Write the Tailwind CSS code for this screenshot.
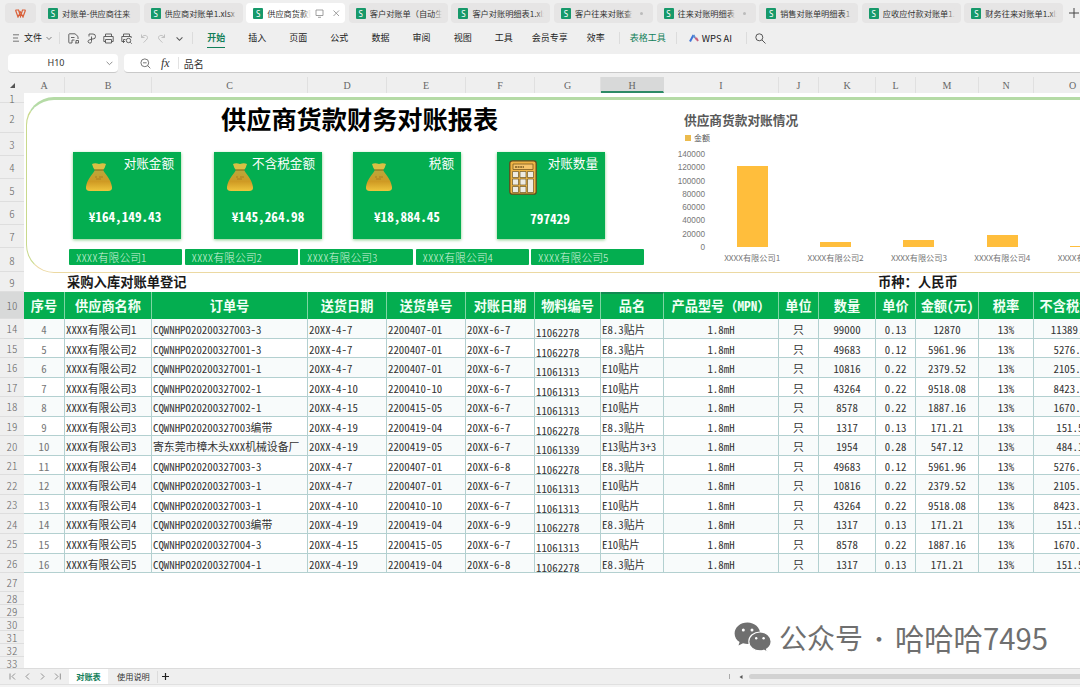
<!DOCTYPE html>
<html lang="zh-CN">

<head>
    <meta charset="UTF-8" />
    <meta name="viewport" content="width=device-width, initial-scale=1.0" />
    <title>供应商货款财务对账报表</title>
    <script src="https://cdn.jsdelivr.net/npm/@tailwindcss/browser@4"></script>
</head>

<body class="w-[1080px] h-[687px] overflow-hidden bg-[#efefef] text-[#333] font-['Noto_Sans_CJK_SC',sans-serif]">
    <svg class="absolute w-0 h-0">
        <defs>
            <linearGradient id="gold" x1="0" y1="0" x2="0" y2="1">
                <stop offset="0" stop-color="#b9a83c" />
                <stop offset=".55" stop-color="#cf9a24" />
                <stop offset="1" stop-color="#efc53d" />
            </linearGradient>
        </defs>
        <symbol id="bag" viewBox="0 0 28 30">
            <path d="M7 2q3-1.500 7 0q4-1.500 7 0q-1 4-3 6h-8q-2-2-3-6z" fill="#d8c044" />
            <path d="M10 8h8c2 4 8 9 9 17q.5 4-4 4h-18q-4.500 0-4-4c1-8 7-13 9-17z" fill="url(#gold)" />
            <path d="M9.500 8h9" stroke="#8d7420" stroke-width="1.300" />
            <path d="M10 15h2m2 0h4m-7 2h5" stroke="#a47620" stroke-width=".8" />
        </symbol>
    </svg>

    <div class="flex flex-col w-full h-full">
        <!-- File tabs -->
        <div class="flex h-[26px] pt-[3px] pl-[5px] shrink-0">
            <div class="w-[31px] h-5 mr-[5px] shrink-0 rounded bg-[#e6e5e5] flex items-center justify-center">
                <svg class="w-[11px] h-[9px]" viewBox="0 0 22 18" fill="none" stroke="#d9613b" stroke-width="2.400">
                    <path d="M1 2h6l4 13 4-13h6M1 2l5 14 5-10 5 10 5-14M7 2l3 6" />
                </svg>
            </div>
            <div id="tabs" class="flex gap-[3.600px]"></div>
            <svg class="w-[10px] h-[10px] ml-[6px] mt-[5px] shrink-0" viewBox="0 0 10 10" stroke="#444"><path d="M5 0v10M0 5h10" /></svg>
        </div>

        <!-- Menu -->
        <div class="flex items-center h-[24px] pl-[12px] shrink-0 text-[9px] whitespace-nowrap text-[#222]">
            <svg class="w-2 h-2 mr-1 shrink-0" viewBox="0 0 8 8" stroke="#555" stroke-width=".8"><path d="M1 .8h6M1 4h5M1 7.200h6" /></svg>
            <span class="w-[18px]">文件</span>
            <svg class="w-[6px] h-[6px] ml-[4px] shrink-0" viewBox="0 0 6 6" fill="none" stroke="#666" stroke-width=".8"><path d="M.5 2l2.500 2.500 2.500-2.500" /></svg>
            <div class="w-px h-3 ml-[7px] bg-[#dcdcdc]"></div>
            <div class="flex items-center gap-[6.700px] ml-[8px] text-[#555]">
                <svg class="w-[11px] h-[11px]" viewBox="0 0 11 11" fill="none" stroke="currentColor" stroke-width=".9"><path d="M4 10H1.500q-.7 0-.7-.7V1.500q0-.7.7-.7H7L10 3.500V6M3 4.500h3.500M4 10v-3h2.500M7 10h3.500V7.500H8V10" /></svg>
                <svg class="w-[11px] h-[11px]" viewBox="0 0 11 11" fill="none" stroke="currentColor" stroke-width=".9"><path d="M3 3.500V1h4a2.300 2.300 0 0 1 0 5H5.500v2.500a1.700 1.700 0 1 1-3 -1.200l3-1.300V3.500" /></svg>
                <svg class="w-[11px] h-[11px]" viewBox="0 0 11 11" fill="none" stroke="currentColor" stroke-width=".9"><path d="M2.500 3.500V1h6v2.500M2.500 8.500H.8v-5h9.400v5H8.500M2.500 6.500h6V10h-6z" /></svg>
                <svg class="w-[11px] h-[11px]" viewBox="0 0 11 11" fill="none" stroke="currentColor" stroke-width=".9"><path d="M2.500 3.500V1h6v2.500M4 8.500H.8v-5h9.400V5M2.500 10V6.500h2M9.300 9.300l1.400 1.400" /><circle cx="7.500" cy="7.500" r="2.200" /></svg>
                <svg class="w-[11px] h-[11px] text-[#bbb]" viewBox="0 0 11 11" fill="none" stroke="currentColor" stroke-width=".9"><path d="M2.500 1.500v3h3M2.500 4.500C4 2 8 1.500 8.500 4.500 8.500 6.500 6 8 4.500 9.500" /></svg>
                <svg class="w-[11px] h-[11px] text-[#bbb]" viewBox="0 0 11 11" fill="none" stroke="currentColor" stroke-width=".9"><path d="M8.500 1.500v3h-3M8.500 4.500C7 2 3 1.500 2.500 4.500 2.500 6.500 5 8 6.500 9.500" /></svg>
                <svg class="w-[7px] h-[7px] ml-[2px]" viewBox="0 0 6 6" fill="none" stroke="currentColor" stroke-width=".9"><path d="M.5 2l2.500 2.500 2.500-2.500" /></svg>
            </div>
            <div class="w-px h-3 ml-[9px] bg-[#dcdcdc]"></div>
            <div class="ml-[14px] relative w-[18px] font-bold text-[#12805a]">开始<div class="absolute left-0 right-0 -bottom-[3px] h-px bg-[#12805a]"></div></div>
            <div class="flex gap-[23.100px] ml-[23px]">
                <span>插入</span><span>页面</span><span>公式</span><span>数据</span><span>审阅</span><span>视图</span><span>工具</span>
            </div>
            <span class="ml-[19px]">会员专享</span>
            <span class="ml-[19px]">效率</span>
            <div class="w-px h-3 ml-[14px] bg-[#dcdcdc]"></div>
            <span class="ml-[10px] text-[#12805a]">表格工具</span>
            <div class="w-px h-3 ml-[10px] bg-[#dcdcdc]"></div>
            <svg class="w-[10px] h-2 ml-[12px]" viewBox="0 0 10 8" fill="none" stroke-width="2"><path d="M1 7.500L4.500 1" stroke="#3f74d8" /><path d="M4.500 1L6 4" stroke="#5d8fd0" /><path d="M6 4.500h1.500l1.500 2.500" stroke="#c9607c" /></svg>
            <span class="ml-[3px] text-[9.400px]">WPS AI</span>
            <div class="w-px h-3 ml-[14px] bg-[#dcdcdc]"></div>
            <svg class="w-[11px] h-[11px] ml-[8px]" viewBox="0 0 11 11" fill="none" stroke="#444" stroke-width=".9"><circle cx="4.300" cy="4.300" r="3.500" /><path d="M7 7l3.500 3.500" /></svg>
        </div>

        <!-- Formula bar -->
        <div class="flex h-[27px] pt-[4px] pl-[8px] gap-[6px] shrink-0 text-[9px]">
            <div class="flex items-center w-[110px] h-[19px] bg-white rounded-sm border-b border-[#c9c9c9] text-[#333]">
                <span class="w-[96px] text-center font-['Noto_Sans',sans-serif]">H10</span>
                <svg class="w-[7px] h-[7px] ml-[2px]" viewBox="0 0 6 6" fill="none" stroke="#888" stroke-width=".8"><path d="M.5 1.500l2.500 2.500 2.500-2.500" /></svg>
            </div>
            <div class="flex items-center flex-1 h-[19px] bg-white rounded-l-sm border-b border-[#c9c9c9] pl-[16px]">
                <svg class="w-[11px] h-[11px]" viewBox="0 0 11 11" fill="none" stroke="#555" stroke-width=".8"><circle cx="4.800" cy="4.800" r="3.900" /><path d="M3 4.800h3.600M7.700 7.700l2.600 2.600" /></svg>
                <span class="ml-[10px] text-[12px] leading-[16px] italic font-['Liberation_Serif',serif]">fx</span>
                <div class="w-px h-3 ml-[8px] bg-[#e2e2e2]"></div>
                <span class="ml-[5px] text-[10px]">品名</span>
            </div>
        </div>

        <!-- Column letters -->
        <div class="flex h-[16px] shrink-0 text-[10px] text-[#666] font-['Liberation_Serif',serif]">
            <div class="w-[24px] shrink-0 flex items-end justify-end pr-[9px] pb-[5px]"><svg class="w-[5px] h-[5px]" viewBox="0 0 5 5"><path d="M5 0v5H0z" fill="#555" /></svg></div>
            <div id="letters" class="flex leading-[18px] text-center"></div>
        </div>

        <div class="flex h-[575px] shrink-0 overflow-hidden">
            <!-- Row numbers -->
            <div id="rowNums" class="w-[24px] shrink-0 text-[10.850px] text-[#666] text-center [font-feature-settings:'hwid'] font-light"></div>

            <div class="w-[1090px] shrink-0 bg-white">
                <!-- Dashboard -->
                <div class="h-[180px] pt-[4px] pl-[2px]">
                    <div class="flex h-[176px] rounded-l-[28px] border-t-[3px] border-l border-b border-t-[#b5dba6] border-l-[#c9d98c] border-b-[#ecd9a2]">
                        <div class="w-[631px] shrink-0 pl-[42px]">
                            <h1 class="pl-[152px] h-[52px] text-[25.200px] leading-[36px] font-bold text-black">供应商货款财务对账报表</h1>
                            <div id="cards" class="flex pl-[4px] h-[97px]"></div>
                            <div id="slicers" class="flex gap-[2.500px]"></div>
                        </div>
                        <div class="pt-[10px] w-[460px]">
                            <h2 class="pl-[26px] text-[12.700px] leading-[20px] font-bold text-[#595959]">供应商货款对账情况</h2>
                            <div class="flex items-center h-[15px] pl-[27px] text-[8px] text-[#555]"><span class="w-[6px] h-[6px] mr-[3px] bg-[#ecbb4d]"></span>金额</div>
                            <div class="flex pt-[3px]">
                                <div id="axis" class="w-[47px] shrink-0 text-right text-[8.200px] leading-[13.270px] text-[#777] font-['Liberation_Sans',sans-serif]"></div>
                                <div id="bars" class="flex ml-[5.500px] h-[113px]"></div>
                            </div>
                        </div>
                    </div>
                </div>

                <!-- Row 9 captions -->
                <div class="flex h-[19px] text-[13.300px] leading-[18px] font-bold text-[#1a1a1a]">
                    <span class="w-[811px] pl-[43px]">采购入库对账单登记</span>
                    <span class="pl-[43px]">币种：人民币</span>
                </div>

                <!-- Statement table -->
                <div id="head" class="flex h-[27px] bg-[#04ae50] text-[#f2fff6] text-[13.200px] leading-[27px] font-bold text-center whitespace-nowrap [font-feature-settings:'hwid']"></div>
                <div id="body" class="text-[10.850px] leading-[20px] whitespace-nowrap text-[#333] [font-feature-settings:'hwid']"></div>
            </div>
        </div>

        <!-- Sheet tabs -->
        <div class="flex items-center h-[16px] shrink-0 pl-[9px] border-t border-[#dcdcdc] text-[8.200px] whitespace-nowrap">
            <svg class="w-[52px] h-[7px]" viewBox="0 0 52 7" fill="none" stroke="#888" stroke-width=".9"><path d="M1 .5v6M6 .5L3 3.500l3 3M20 .5L17 3.500l3 3M32 .5l3 3-3 3M46 .5l3 3-3 3M51.300 .5v6" /></svg>
            <div class="w-[39px] h-[16px] ml-[8px] bg-white text-center leading-[15px] font-bold text-[#12805a]">对账表</div>
            <span class="ml-[9px] w-[33px]">使用说明</span>
            <div class="w-px h-3 ml-[7px] bg-[#dcdcdc]"></div>
            <svg class="w-[7px] h-[7px] ml-[4px]" viewBox="0 0 7 7" stroke="#222" stroke-width="1.200"><path d="M3.500 0v7M0 3.500h7" /></svg>
            <div class="w-px h-[5px] ml-[560px] bg-[#aaa]"></div>
            <svg class="w-1 h-1 ml-[9px]" viewBox="0 0 4 4"><path d="M3.500 0v4L.5 2z" fill="#555" /></svg>
            <div class="flex-1 h-[5px] ml-[6px] rounded-l-full bg-[#d2d2d2]"></div>
        </div>
        <div class="h-[3px] bg-[#f3f3f3] border-t border-[#e0e0e0]"></div>
    </div>

    <!-- Watermark -->
    <div class="absolute left-[734px] top-[619px] flex items-center text-[#6f6f6f] whitespace-nowrap">
        <svg class="w-[38px] h-[34px]" viewBox="0 0 38 31">
            <path d="M13.500 1C6.300 1 .6 5.800.6 12c0 3.600 1.900 6.600 5 8.600L4.500 24l4.500-2.200q2.500.7 4.500.7c7 0 12.700-4.800 12.700-10.500S20.500 1 13.500 1z" fill="currentColor" />
            <path d="M26 10.500c-6.200 0-11.200 4.200-11.200 9.400S19.800 29.300 26 29.300q2 0 3.800-.6l3.600 1.900-.9-3c2.800-1.800 4.600-4.500 4.600-7.700 0-5.200-4.900-9.400-11.100-9.400z" fill="currentColor" stroke="#fff" stroke-width="1.100" />
            <circle cx="9.300" cy="8.500" r="1.500" fill="#fff" /><circle cx="18" cy="8.500" r="1.500" fill="#fff" />
            <circle cx="22.200" cy="16.800" r="1.200" fill="#fff" /><circle cx="29.600" cy="16.800" r="1.200" fill="#fff" />
        </svg>
        <span class="ml-[7px] text-[28px] leading-[36px]">公众号</span>
        <span class="w-[32px] text-center text-[22px] leading-[36px]">·</span>
        <span class="text-[29.300px] leading-[36px]">哈哈哈7495</span>
    </div>

    <script>
        const $ = id => document.getElementById(id);

        // file tabs
        const files = ['对账单-供应商往来', '供应商对账单1.xlsx', '供应商货款财', '客户对账单（自动生', '客户对账明细表1.xlsx', '客户往来对账查', '往来对账明细表', '销售对账单明细表1', '应收应付款对账单1.', '财务往来对账单1.xlsx'];
        $('tabs').innerHTML = files.map((f, i) => {
            const active = i === 2;
            const dot = i === 5 || i === 6;
            return `<div class="flex items-center w-[99px] h-5 shrink-0 rounded pl-[7px] ${active ? 'bg-white' : 'bg-[#e6e5e5]'}">
                <div class="w-[10px] h-[11px] shrink-0 rounded-[1px] bg-[#17996a] text-white text-[8px] leading-[11px] text-center font-['Noto_Sans',sans-serif]">S</div>
                <div class="relative ml-[4px] overflow-hidden whitespace-nowrap text-[8.200px] leading-[14px] text-[#333] ${active ? 'w-[44px]' : dot ? 'w-[58px]' : 'w-[72px]'}">${f}
                    <div class="absolute right-0 top-0 w-2 h-full bg-linear-to-r ${active ? 'from-white/0 to-white' : 'from-[#e6e5e5]/0 to-[#e6e5e5]'}"></div>
                </div>
                ${active ? '<svg class="w-[26px] h-[9px] ml-[4px] shrink-0" viewBox="0 0 26 9" fill="none" stroke="#888" stroke-width=".8"><path d="M1 1h7v5.500H1zM3 8.300h3M18.500 1.500l5.500 5.500M24 1.500l-5.500 5.500"/></svg>' : ''}
                ${dot ? '<span class="w-[3px] h-[3px] ml-[7px] rounded-full bg-[#bbb]"></span>' : ''}
            </div>`;
        }).join('');

        // columns A..O
        const widths = [41, 87, 156, 79, 79, 69, 66, 63, 115, 40, 57, 40, 63, 55, 78];
        $('letters').innerHTML = widths.map((w, i) =>
            `<div class="shrink-0 border-r ${i === 7 ? 'bg-[#d8d9d9] border-[#d8d9d9] border-b-2 border-b-[#2c8a66]' : 'border-[#e0e0e0]'}" style="width:${w}px">${'ABCDEFGHIJKLMNO'[i]}</div>`).join('');

        // row numbers, [label, height]
        const rows = [['1', 10], ['2', 30], ['3', 23], ['4', 23], ['5', 23], ['6', 23], ['7', 23], ['8', 24], ['9', 20], ['10', 27]];
        for (let n = 14; n <= 26; n++) rows.push([n, 19.55]);
        rows.push(['27', 19]);
        for (let n = 28; n <= 33; n++) rows.push([n, 12.900]);
        $('rowNums').innerHTML = rows.map(([n, h]) =>
            `<div class="flex items-center justify-center border-b border-[#dedede] ${n === '10' ? 'bg-[#d8d9d9]' : ''}" style="height:${h}px"><span class="leading-[10px]">${n}</span></div>`).join('');

        // KPI cards
        const bag = '<svg class="w-[28px] h-[30px]"><use href="#bag"/></svg>';
        const calc = `<svg class="w-[28px] h-[35px]" viewBox="0 0 28 35"><rect x=".8" y=".8" width="26.400" height="33.400" rx="2.500" fill="#f0b445" stroke="#5d4a1c" stroke-width="1.300"/><path d="M4 4h20v5.500H4z" fill="#f6c46a" stroke="#7a5a20" stroke-width=".8"/><path d="M6 7h9" stroke="#7a5a20" stroke-dasharray="2 .6" stroke-width="1.500"/>
            <path d="M3.500 11.500h6v6h-6zM11 11.500h6v6h-6zM18.500 11.500h6v6h-6zM3.500 19h6v6h-6zM11 19h6v6h-6zM18.500 19h6v13.500h-6zM3.500 26.500h6v6h-6zM11 26.500h6v6h-6z" fill="#eeebe2" stroke="#6d5624" stroke-width=".7"/></svg>`;
        const cards = [['对账金额', '¥164,149.43', 33, bag], ['不含税金额', '￥145,264.98', 31, bag], ['税额', '￥18,884.45', 36, bag], ['对账数量', '797429', 0, calc]];
        $('cards').innerHTML = cards.map(([label, val, gap, icon], i) =>
            `<div class="relative w-[108px] h-[87px] shrink-0 bg-[#04ae50] shadow-[0_1px_3px_#8c8] text-white" style="margin-right:${gap}px">
                <div class="absolute left-[12px] ${i === 3 ? 'top-[8px]' : 'top-[10px]'}">${icon}</div>
                <div class="pr-[7px] pt-[2px] text-right text-[12.600px] leading-[18px]">${label}</div>
                <div class="${i === 3 ? 'pt-[38px] pr-[2px]' : i === 0 ? 'pt-[36px] pr-[4px]' : 'pt-[36px]'} text-center text-[13.200px] leading-[18px] font-bold [font-feature-settings:'hwid'] whitespace-nowrap">${val}</div>
            </div>`).join('');

        $('slicers').innerHTML = [1, 2, 3, 4, 5].map(n =>
            `<div class="w-[113px] h-[16px] rounded-[1px] bg-[#04ae50] pl-[7px] text-[10.850px] leading-[16px] text-[#d3f3dd] font-light [font-feature-settings:'hwid']">XXXX有限公司${n}</div>`).join('');

        // chart
        $('axis').innerHTML = [140000, 120000, 100000, 80000, 60000, 40000, 20000, 0].map(v => `<div>${v}</div>`).join('');
        $('bars').innerHTML = [122500, 8300, 11200, 17500, 2200].map((v, i) =>
            `<div class="flex flex-col items-center justify-end w-[83.400px] shrink-0">
                <div class="w-[31px] bg-[#ffbe3c]" style="height:${v / 1505}px"></div>
                <div class="h-[9px] mt-[5px] text-[8.200px] leading-[10px] text-[#777] whitespace-nowrap">XXXX有限公司${i + 1}</div>
            </div>`).join('');

        // table
        const mpn = '产品型号<span class="[font-feature-settings:normal]">（</span>MPN<span class="[font-feature-settings:normal]">）</span>';
        const heads = ['序号', '供应商名称', '订单号', '送货日期', '送货单号', '对账日期', '物料编号', '品名', mpn, '单位', '数量', '单价', '金额(元)', '税率', '不含税金额'];
        $('head').innerHTML = heads.map((h, i) =>
            `<div class="shrink-0 border-r border-r-[#7fd6a3] ${i === 7 ? 'border-t-2 border-t-[#128a52] leading-[23px]' : ''}" style="width:${widths[i]}px">${h}</div>`).join('');

        const items = {
            a: ['E8.3贴片', 99000, '0.13', '12870', '11389.38'],
            b: ['E8.3贴片', 49683, '0.12', '5961.96', '5276.07'],
            c: ['E10贴片', 10816, '0.22', '2379.52', '2105.77'],
            d: ['E10贴片', 43264, '0.22', '9518.08', '8423.08'],
            e: ['E10贴片', 8578, '0.22', '1887.16', '1670.05'],
            f: ['E8.3贴片', 1317, '0.13', '171.21', '151.51'],
            g: ['E13贴片3+3', 1954, '0.28', '547.12', '484.18'],
        };
        const P = 'CQWNHPO20200327';
        const data = [
            [1, P + '003-3', '4-7', '0407-01', '6-7', '11062278', 'a'],
            [2, P + '001-3', '4-7', '0407-01', '6-7', '11062278', 'b'],
            [2, P + '001-1', '4-7', '0407-01', '6-7', '11061313', 'c'],
            [3, P + '002-1', '4-10', '0410-10', '6-7', '11061313', 'd'],
            [3, P + '002-1', '4-15', '0415-05', '6-7', '11061313', 'e'],
            [3, P + '003编带', '4-19', '0419-04', '6-7', '11062278', 'f'],
            [3, '寄东莞市樟木头XXX机械设备厂', '4-19', '0419-05', '6-7', '11061339', 'g'],
            [4, P + '003-3', '4-7', '0407-01', '6-8', '11062278', 'b'],
            [4, P + '003-1', '4-7', '0407-01', '6-7', '11061313', 'c'],
            [4, P + '003-1', '4-10', '0410-10', '6-7', '11061313', 'd'],
            [4, P + '003编带', '4-19', '0419-04', '6-9', '11062278', 'f'],
            [5, P + '004-3', '4-15', '0415-05', '6-7', '11061313', 'e'],
            [5, P + '004-1', '4-19', '0419-04', '6-8', '11062278', 'f'],
        ];
        $('body').innerHTML = data.map(([s, order, d1, no, d2, mat, k], r) => {
            const [name, qty, price, sum, net] = items[k];
            const cells = [r + 4, 'XXXX有限公司' + s, order, '20XX-' + d1, '220' + no, '20XX-' + d2, mat, name, '1.8mH', '只', qty, price, sum, '13%', net];
            return `<div class="flex h-[19.550px] border-b border-[#b3d0d0] ${r % 2 ? '' : 'bg-[#f8fbfb]'}">` + cells.map((c, i) =>
                `<div class="shrink-0 border-r border-[#b3d0d0] ${i === 0 ? 'text-center text-[#777]' : i < 8 ? 'pl-[1px]' : 'text-center'} ${i === 6 ? 'pt-[3px]' : ''}" style="width:${widths[i]}px">${c}</div>`).join('') + '</div>';
        }).join('');
    </script>
</body>

</html>
